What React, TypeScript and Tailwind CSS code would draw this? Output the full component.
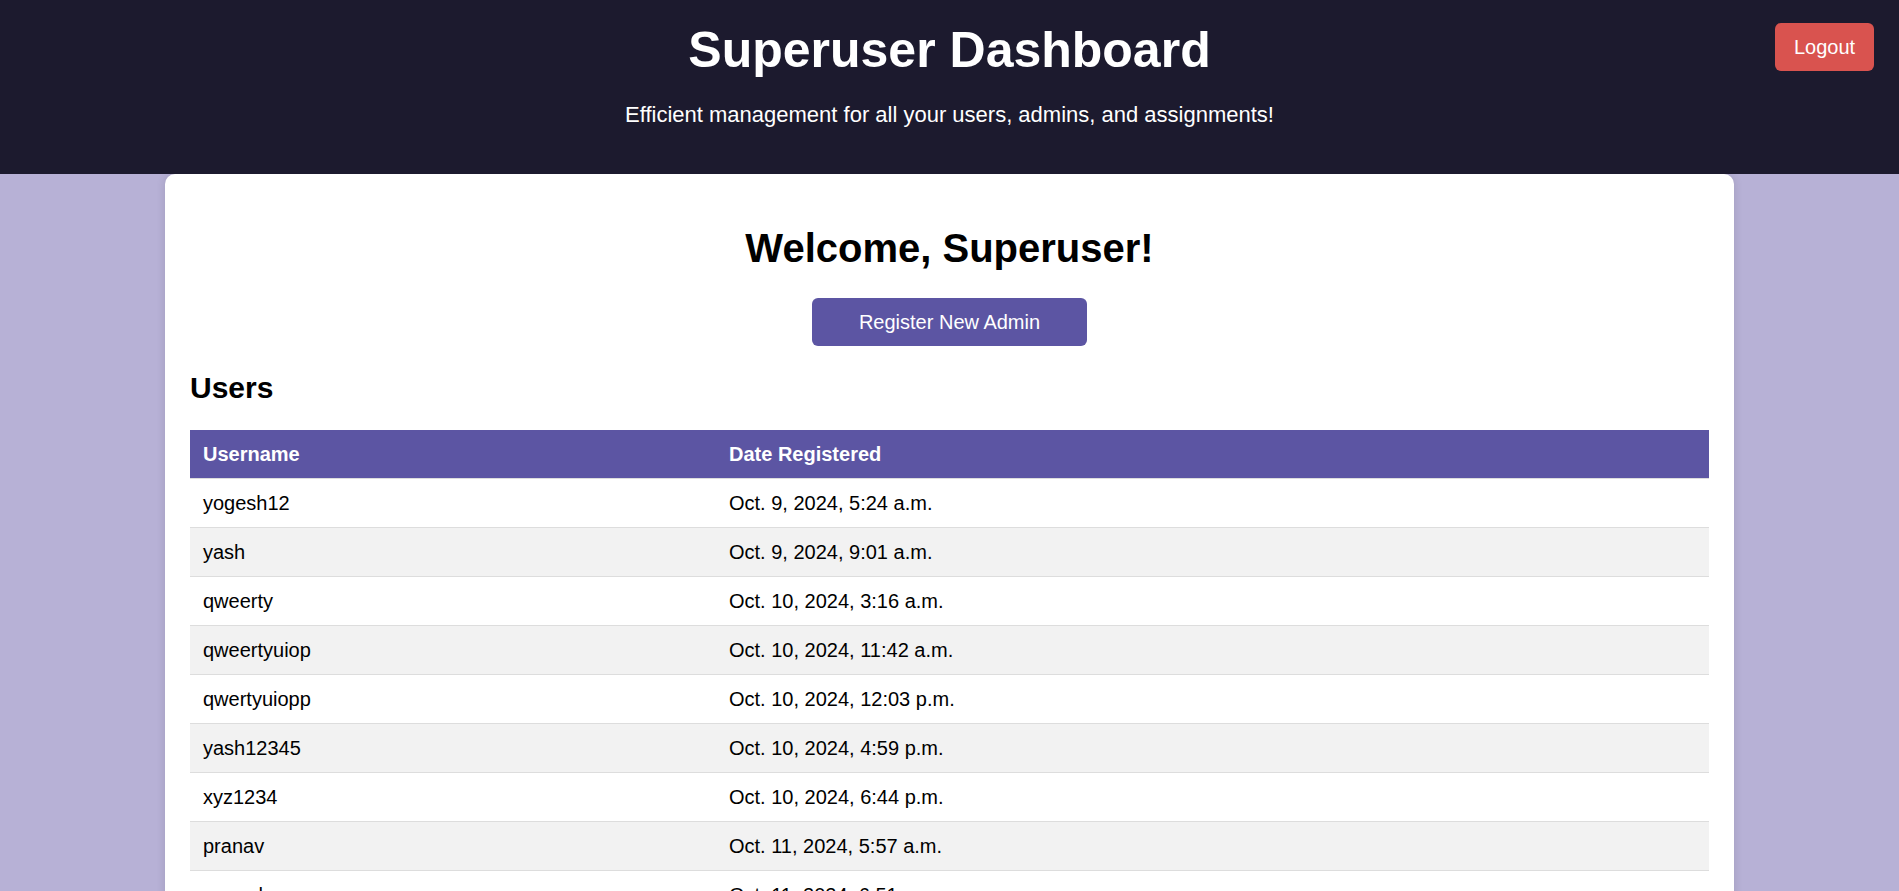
import React from "react";

const users = [
  { name: "yogesh12", date: "Oct. 9, 2024, 5:24 a.m." },
  { name: "yash", date: "Oct. 9, 2024, 9:01 a.m." },
  { name: "qweerty", date: "Oct. 10, 2024, 3:16 a.m." },
  { name: "qweertyuiop", date: "Oct. 10, 2024, 11:42 a.m." },
  { name: "qwertyuiopp", date: "Oct. 10, 2024, 12:03 p.m." },
  { name: "yash12345", date: "Oct. 10, 2024, 4:59 p.m." },
  { name: "xyz1234", date: "Oct. 10, 2024, 6:44 p.m." },
  { name: "pranav", date: "Oct. 11, 2024, 5:57 a.m." },
  { name: "ramesh", date: "Oct. 11, 2024, 6:51 a.m." },
  { name: "admin01", date: "Oct. 12, 2024, 8:15 a.m." },
];

export default function App() {
  return (
    <div className="min-h-screen bg-[#b7b1d6] font-['Liberation_Sans',Arial,sans-serif]">
      <header className="relative h-[174px] bg-[#1c1a2e] pt-[22px] text-center text-white">
        <h1 className="text-[50px] font-bold leading-[57px]">Superuser Dashboard</h1>
        <p className="mt-[23px] text-[22px] leading-[25px]">
          Efficient management for all your users, admins, and assignments!
        </p>
        <button className="absolute right-[25px] top-[23px] h-[48px] w-[99px] rounded-[6px] bg-[#d9534f] text-[20px] text-white">
          Logout
        </button>
      </header>

      <main className="mx-auto w-[1569px] rounded-t-[10px] bg-white px-[25px] pb-[25px] pt-[51px] shadow-[0_0_10px_rgba(0,0,0,0.12)]">
        <h2 className="text-center text-[40px] font-bold leading-[46px] text-black">Welcome, Superuser!</h2>
        <div className="mt-[27px] flex justify-center">
          <button className="h-[48px] w-[275px] rounded-[6px] bg-[#5c55a3] text-[20px] text-white">
            Register New Admin
          </button>
        </div>

        <h3 className="mt-[25px] text-[30px] font-bold leading-[34px] text-black">Users</h3>

        <table className="mt-[25px] w-full border-collapse text-left text-[20px] leading-[23px] text-black">
          <thead>
            <tr className="bg-[#5c55a3] text-white">
              <th className="w-[526px] border-b border-[#ddd] px-[13px] py-[12.5px] font-bold">Username</th>
              <th className="border-b border-[#ddd] px-[13px] py-[12.5px] font-bold">Date Registered</th>
            </tr>
          </thead>
          <tbody>
            {users.map((u, i) => (
              <tr key={u.name} className={i % 2 === 1 ? "bg-[#f2f2f2]" : "bg-white"}>
                <td className="border-b border-[#ddd] px-[13px] py-[12.5px]">{u.name}</td>
                <td className="border-b border-[#ddd] px-[13px] py-[12.5px]">{u.date}</td>
              </tr>
            ))}
          </tbody>
        </table>
      </main>
    </div>
  );
}
